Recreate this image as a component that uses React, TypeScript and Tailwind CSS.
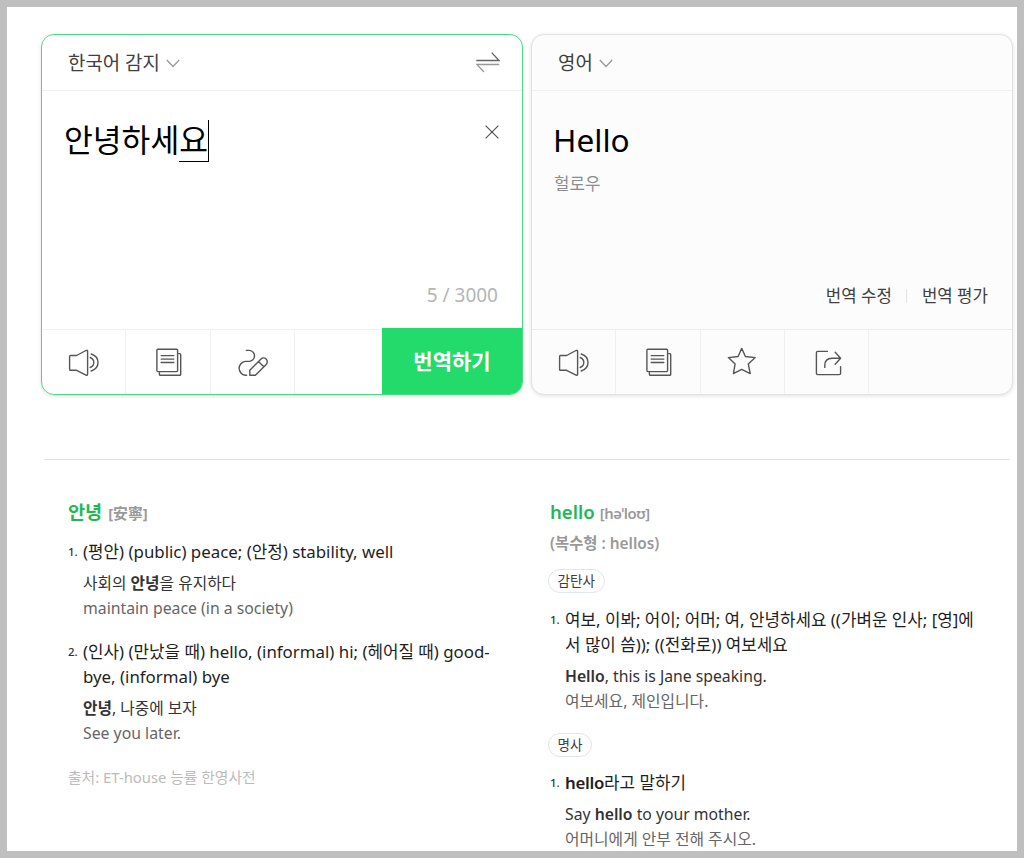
import type { ReactNode } from 'react';

type IconProps = { children: ReactNode };

function ToolIcon({ children }: IconProps) {
  return (
    <svg viewBox="0 0 32 32" className="w-8 h-8" fill="none" stroke="#555" strokeWidth="1.4" strokeLinecap="round" strokeLinejoin="round">
      {children}
    </svg>
  );
}

function SpeakerIcon() {
  return (
    <ToolIcon>
      <path d="M2.5 9.5H8.6L18 4.5Q19.6 4 19.6 5.4V28.2Q19.6 29.7 18 29.1L8.6 24.3H2.5Q1.6 24.3 1.6 23.4V10.4Q1.6 9.5 2.5 9.5Z" />
      <path d="M22.2 11.5Q25.8 13 25.8 16.5Q25.8 20 22.2 21.5M23.2 8Q30 10.2 30 16.5Q30 22.8 23.2 25" />
    </ToolIcon>
  );
}

function NoteIcon() {
  return (
    <ToolIcon>
      <rect x="4.9" y="3.3" width="20.7" height="22.3" rx="1" />
      <path d="M26.6 7.6H27.8Q28.7 7.6 28.7 8.5V28.4Q28.7 29.3 27.8 29.3H8.3Q7.4 29.3 7.4 28.4V26.6M9.2 9.6H21.8M9.2 13.1H21.8M9.2 16.5H21.8" />
    </ToolIcon>
  );
}

function HandwriteIcon() {
  return (
    <ToolIcon>
      <path d="M10.3 4.4H13A5.5 5.5 0 0 1 13 15.4H9.3A7 7 0 0 0 9.3 29.3H10.6" />
      <path d="M13.8 29.3V24.2L24.8 13.2A3.7 3.7 0 0 1 30.2 18.4L19.4 29.3ZM22.4 15.6L27.9 20.7" />
    </ToolIcon>
  );
}

function StarIcon() {
  return (
    <ToolIcon>
      <path d="M15.7 2.4L19.4 10.5L29.2 11.6L22.3 18L24.2 27.6L15.7 23.4L7.4 27.6L9.1 18L2.4 11.6L12.1 10.5Z" />
    </ToolIcon>
  );
}

function ShareIcon() {
  return (
    <ToolIcon>
      <path d="M16.4 5.4H6.8Q5.4 5.4 5.4 6.8V27.2Q5.4 28.6 6.8 28.6H28.2Q29.6 28.6 29.6 27.2V20.6" />
      <path d="M13.8 21.4V19.5Q13.8 12.3 21 12.3H29.3M24.2 6.3L29.6 12.3L24.2 18.2" />
    </ToolIcon>
  );
}

function Chevron() {
  return (
    <svg viewBox="0 0 14 9" className="w-[14px] h-[9px]" fill="none" stroke="#999" strokeWidth="1.3">
      <path d="M0.8 1L7 7.5L13.2 1" />
    </svg>
  );
}

function Tool({ children }: IconProps) {
  return <button className="w-[84.3px] flex items-center justify-center border-r border-[#f0f0f0]">{children}</button>;
}

function PartOfSpeech({ children }: IconProps) {
  return (
    <span className="-ml-[2px] h-6 px-[8.5px] pb-px flex items-center w-fit rounded-full border border-[#dfe5e8] text-[13.6px] text-[#404040] whitespace-nowrap">
      {children}
    </span>
  );
}

type EntryProps = { no: number; meaning: ReactNode; example: ReactNode; translation: string };

function Entry({ no, meaning, example, translation }: EntryProps) {
  return (
    <div className="flex">
      <span className="w-[15px] shrink-0 text-[11.5px] text-[#333] font-medium">{no}.</span>
      <div className="whitespace-nowrap">
        <p className="text-[16.85px] text-[#1e1e1e]">{meaning}</p>
        <p className="mt-[7px] text-[15.75px] text-[#333]">{example}</p>
        <p className="text-[15.8px] text-[#666]">{translation}</p>
      </div>
    </div>
  );
}

export default function App() {
  return (
    <div className="w-[1024px] h-[858px] border-[7px] border-[#bfbfbf] bg-white overflow-hidden font-['Noto_Sans','Noto_Sans_CJK_KR',sans-serif]">
      {/* Translator */}
      <div className="flex gap-2 pl-[34px] pt-[27px]">
        <section className="w-[482px] h-[361px] flex flex-col rounded-[13px] border border-[#4bdc83] overflow-hidden shadow-[0_1px_4px_rgba(0,0,0,0.12)]">
          <header className="h-14 shrink-0 flex items-center justify-between pl-[26px] pr-[22px] border-b border-[#f0f0f0]">
            <div className="flex items-center gap-[6px] pt-[2px] text-[18.9px] text-[#404040]">
              <span>한국어 감지</span>
              <Chevron />
            </div>
            <svg viewBox="0 0 24 22" className="w-6 h-[22px] mb-[2px]" fill="none" strokeWidth="1.3">
              <path d="M0.3 9.5H23L15.7 1.6" stroke="#666" />
              <path d="M23.3 13.5H0.8L8 21" stroke="#999" />
            </svg>
          </header>
          <div className="grow flex flex-col justify-between pl-[22px] pr-[24px] pt-[29px] pb-[19px]">
            <div className="flex justify-between">
              <p className="h-[42px] flex text-[31.3px] leading-[41px] text-black">
                <span>안녕하세</span>
                <span className="border-b border-black">요</span>
                <span className="w-px bg-black" />
              </p>
              <svg viewBox="0 0 14 14" className="w-[14px] h-[14px] mt-[5px] -mr-px" fill="none" stroke="#555" strokeWidth="1.2">
                <path d="M0.6 0.6L13.4 13.4M13.4 0.6L0.6 13.4" />
              </svg>
            </div>
            <p className="text-right text-[19px] leading-[28px] text-[#b5b5b5]">5 / 3000</p>
          </div>
          <footer className="h-[66px] shrink-0 flex">
            <div className="grow mt-px flex border-t border-[#f0f0f0]">
              <Tool><SpeakerIcon /></Tool>
              <Tool><NoteIcon /></Tool>
              <Tool><HandwriteIcon /></Tool>
            </div>
            <button className="w-[140px] pt-[2px] bg-[#23db6b] text-white text-[21px] font-bold">번역하기</button>
          </footer>
        </section>

        <section className="w-[482px] h-[361px] flex flex-col rounded-[13px] border border-[#e2e2e2] bg-[#fcfcfc] overflow-hidden shadow-[0_1px_4px_rgba(0,0,0,0.12)]">
          <header className="h-14 shrink-0 flex items-center gap-[6px] pt-[2px] pl-[26px] border-b border-[#f0f0f0] text-[18.9px] text-[#404040]">
            <span>영어</span>
            <Chevron />
          </header>
          <div className="grow flex flex-col justify-between pl-[22px] pr-[24px] pt-[28px] pb-[20px]">
            <div>
              <p className="-ml-px text-[31.6px] leading-[42px] text-black">Hello</p>
              <p className="mt-[10px] text-[16.8px] leading-[25px] text-[#8c8c8c]">헐로우</p>
            </div>
            <div className="flex items-center justify-end text-[16.8px] leading-[26px] text-[#404040]">
              <span>번역 수정</span>
              <span className="w-px h-[14px] ml-[14px] mr-[15px] bg-[#e2e2e2]" />
              <span>번역 평가</span>
            </div>
          </div>
          <footer className="h-[65px] shrink-0 flex border-t border-[#ececec]">
            <Tool><SpeakerIcon /></Tool>
            <Tool><NoteIcon /></Tool>
            <Tool><StarIcon /></Tool>
            <Tool><ShareIcon /></Tool>
          </footer>
        </section>
      </div>

      {/* Dictionary */}
      <div className="mt-16 ml-[37px] w-[966px] border-t border-[#e2e2e2] flex pt-[39px] leading-[25px]">
        <div className="w-[482px] pl-6">
          <h2 className="h-[25px] flex items-baseline gap-[6px] font-bold text-[18.6px] text-[#1fb854]">
            안녕 <span className="text-[14.8px] text-[#999]">[安寧]</span>
          </h2>
          <div className="mt-[15px]">
            <Entry
              no={1}
              meaning="(평안) (public) peace; (안정) stability, well"
              example={<>사회의 <b>안녕</b>을 유지하다</>}
              translation="maintain peace (in a society)"
            />
          </div>
          <div className="mt-[18px]">
            <Entry
              no={2}
              meaning={<>(인사) (만났을 때) hello, (informal) hi; (헤어질 때) good-<br />bye, (informal) bye</>}
              example={<><b>안녕</b>, 나중에 보자</>}
              translation="See you later."
            />
          </div>
          <p className="mt-[19px] text-[14.8px] text-[#bbb]">출처: ET-house 능률 한영사전</p>
        </div>

        <div className="pl-6">
          <h2 className="h-[25px] flex items-baseline gap-[5px] font-semibold text-[18.6px] text-[#1fb854]">
            hello <span className="text-[14.8px] tracking-[-0.4px] text-[#999]">[həˈloʊ]</span>
          </h2>
          <p className="mt-[7px] mb-[13px] font-semibold text-[15.4px] text-[#999]">(복수형 : hellos)</p>
          <PartOfSpeech>감탄사</PartOfSpeech>
          <div className="mt-[14px] mb-[19px]">
            <Entry
              no={1}
              meaning={<>여보, 이봐; 어이; 어머; 여, 안녕하세요 ((가벼운 인사; [영]에<br />서 많이 씀)); ((전화로)) 여보세요</>}
              example={<><b className="font-semibold">Hello</b>, this is Jane speaking.</>}
              translation="여보세요, 제인입니다."
            />
          </div>
          <PartOfSpeech>명사</PartOfSpeech>
          <div className="mt-[13px]">
            <Entry
              no={1}
              meaning={<><b className="font-semibold tracking-[-0.3px]">hello</b>라고 말하기</>}
              example={<>Say <b className="font-semibold">hello</b> to your mother.</>}
              translation="어머니에게 안부 전해 주시오."
            />
          </div>
        </div>
      </div>
    </div>
  );
}
